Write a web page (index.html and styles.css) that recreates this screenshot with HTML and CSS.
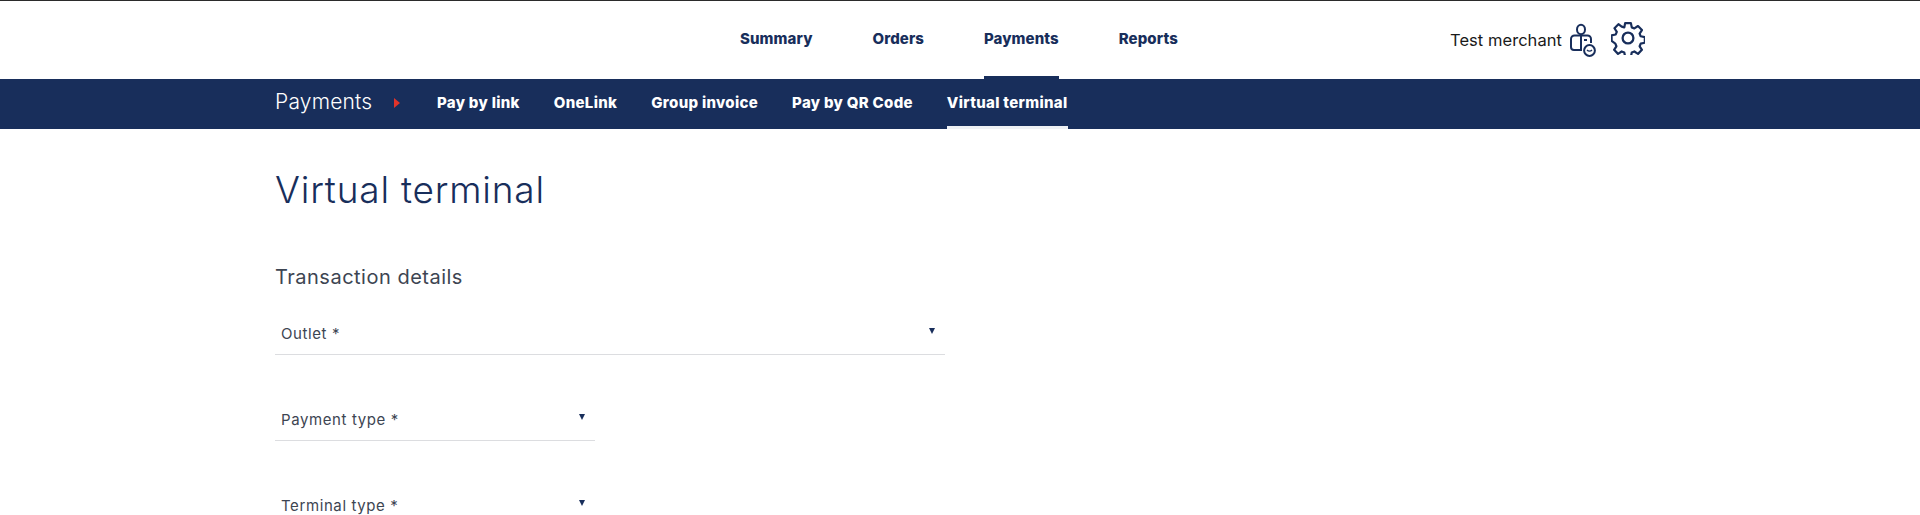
FILE: index.html
```html
<!DOCTYPE html>
<html lang="en">
<head>
<meta charset="utf-8">
<title>Virtual terminal</title>
<link rel="stylesheet" href="styles.css">
</head>
<body>
<header class="top">
  <div class="wrap top-row">
    <nav class="main-nav">
      <a class="main-link">Summary</a>
      <a class="main-link">Orders</a>
      <a class="main-link is-active">Payments</a>
      <a class="main-link">Reports</a>
    </nav>
    <div class="user">
      <span class="merchant">Test merchant</span>
      <svg class="icon-user" viewBox="0 0 26 34" fill="none" stroke="#182e5b" stroke-width="2">
        <ellipse cx="11" cy="6.5" rx="4" ry="4.8"/>
        <path d="M12 27H4A3 3 0 0 1 1 24V16a3.5 3.5 0 0 1 3.5-3.5h13A3.5 3.5 0 0 1 21 16v4"/>
        <path d="M11 13v14M14 17h3"/>
        <circle cx="19.5" cy="27.5" r="5.4" fill="#fff"/>
        <path d="M17 27c1.4 1.5 3.6 1.5 5 0" stroke-width="1.3"/>
      </svg>
      <svg class="icon-gear" viewBox="0 0 34 34" fill="none" stroke="#182e5b" stroke-width="2.3" stroke-linejoin="round">
        <circle cx="17" cy="17" r="5.4"/>
        <path d="M14 1.5h6l.9 4.4 2.7 1.1 3.8-2.5 4.1 4.2-2.4 3.7 1.1 2.8 4.3.9v5.8l-4.3.9-1.1 2.8 2.4 3.7-4.1 4.2-3.8-2.5-2.7 1.1-.9 4.4h-6l-.9-4.4-2.7-1.1-3.8 2.5-4.1-4.2 2.4-3.7-1.1-2.8L-.1 20v-5.8l4.3-.9 1.1-2.8-2.4-3.7L7 2.6l3.4 2.5L13.1 6z" transform="translate(.7 .7) scale(.96)"/>
      </svg>
    </div>
  </div>
</header>
<div class="sub-bar">
  <div class="wrap sub-row">
    <span class="sub-title">Payments</span>
    <span class="sub-arrow"></span>
    <nav class="sub-nav">
      <a class="sub-link">Pay by link</a>
      <a class="sub-link">OneLink</a>
      <a class="sub-link">Group invoice</a>
      <a class="sub-link">Pay by QR Code</a>
      <a class="sub-link is-active">Virtual terminal</a>
    </nav>
  </div>
</div>
<main class="wrap content">
  <h1 class="page-title">Virtual terminal</h1>
  <h2 class="section-title">Transaction details</h2>
  <div class="field field-wide"><span class="field-label">Outlet *</span><span class="caret"></span></div>
  <div class="field field-narrow"><span class="field-label">Payment type *</span><span class="caret"></span></div>
  <div class="field field-narrow"><span class="field-label">Terminal type *</span><span class="caret"></span></div>
</main>
</body>
</html>
```

FILE: styles.css
```css
* { box-sizing: border-box; }
html, body { margin: 0; height: 515px; overflow: hidden; background: #fff; }
body { font-family: "Inter", "Liberation Sans", sans-serif; color: #182e5b; }
.wrap { width: 1370px; margin: 0 auto; }

.top { height: 79px; border-top: 1px solid #2b2b2b; }
.top-row { height: 78px; display: flex; align-items: stretch; }
.main-nav { display: flex; gap: 60px; margin-left: 465px; }
.main-link {
  display: flex; align-items: center; height: 78px; padding-bottom: 1px;
  font-size: 15px; font-weight: 800; letter-spacing: .09px; border-bottom: 3px solid transparent;
}
.main-link.is-active { border-bottom-color: #182e5b; }
.user { margin-left: auto; display: flex; align-items: center; padding-bottom: 1px; }
.merchant { font-size: 16.5px; letter-spacing: .05px; color: #1a1a1a; font-weight: 400; }
.icon-user { width: 26px; height: 34px; margin-left: 8px; }
.icon-gear { width: 34px; height: 34px; margin-left: 15px; margin-top: -3px; }

.sub-bar { height: 50px; background: #182e5b; color: #fff; }
.sub-row { height: 50px; display: flex; align-items: center; }
.sub-title { font-size: 21px; font-weight: 300; letter-spacing: .2px; width: 119px; margin-bottom: 5px; }
.sub-arrow {
  width: 0; height: 0; margin-bottom: 2px; border-left: 6px solid #e2342a;
  border-top: 5px solid transparent; border-bottom: 5px solid transparent;
}
.sub-nav { display: flex; gap: 34px; margin-left: 37px; height: 50px; }
.sub-link {
  display: flex; align-items: center; font-size: 15px; font-weight: 800; letter-spacing: .31px;
  border-bottom: 3px solid transparent;
}
.sub-link.is-active { border-bottom-color: #eef1f5; }

.content { padding-top: 38px; }
.page-title { margin: 0; font-size: 37px; line-height: 46px; font-weight: 300; letter-spacing: .8px; color: #182e5b; }
.section-title { margin: 51px 0 0; font-size: 20px; line-height: 26px; font-weight: 400; letter-spacing: .5px; color: #3d4552; }
.field {
  position: relative; height: 46px; padding: 16px 6px 0;
  border-bottom: 1px solid #dcdde0; margin-bottom: 40px;
}
.field-wide { width: 670px; margin-top: 19px; }
.field-narrow { width: 320px; }
.field-label { font-size: 15px; line-height: 18px; letter-spacing: .6px; color: #3d4552; display: block; }
.caret {
  position: absolute; right: 10px; top: 19px; width: 0; height: 0;
  border-top: 6px solid #182e5b; border-left: 3px solid transparent; border-right: 3px solid transparent;
}
```
